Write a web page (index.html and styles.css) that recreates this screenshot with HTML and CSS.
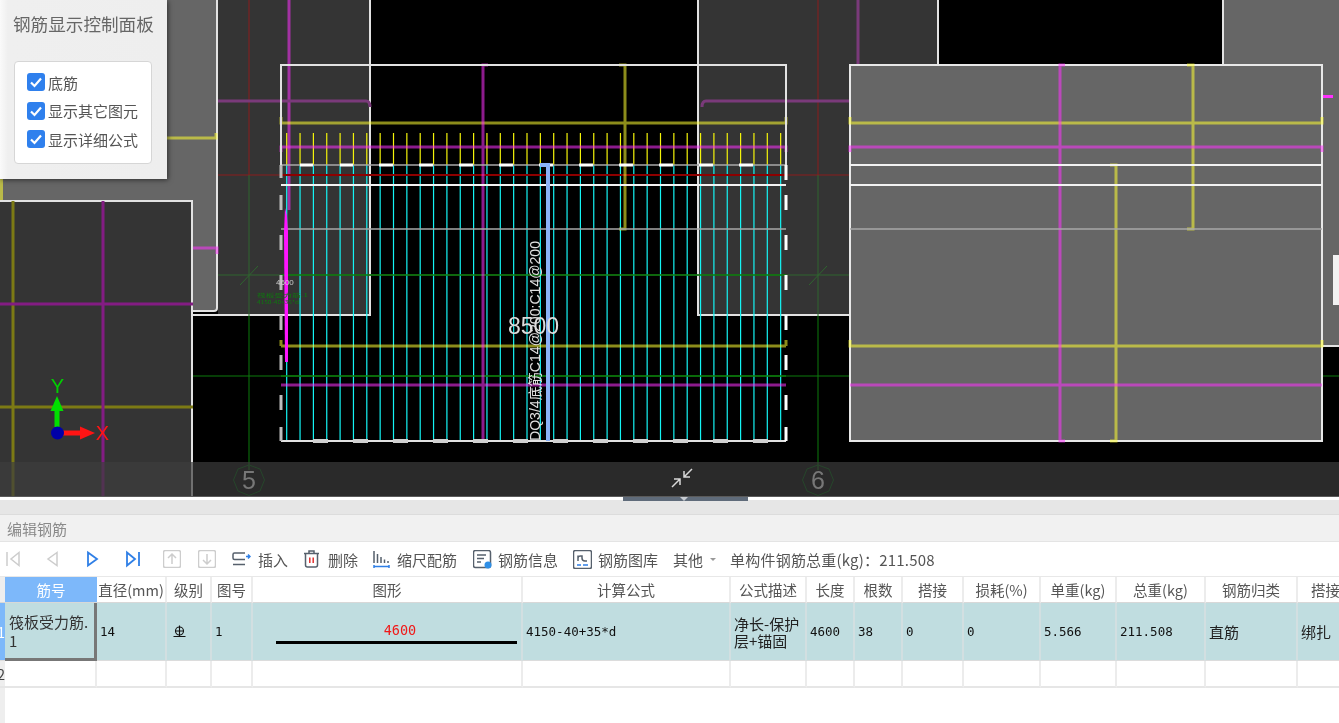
FILE: index.html
```html
<!DOCTYPE html>
<html lang="zh-CN">
<head>
<meta charset="utf-8">
<title>编辑钢筋</title>
<link rel="stylesheet" href="styles.css">
</head>
<body>
<div class="app">
  <section class="viewport">
    <svg class="cad" width="1339" height="496" viewBox="0 0 1339 496">
      <rect class="bg-black" width="1339" height="496"/>
      <!-- structural blocks behind the slab -->
      <rect class="fill-gray" x="0" y="0" width="217" height="311"/>
      <path class="ln-block" d="M217 0V308q0 3-3 3H193"/>
      <rect class="fill-dark" x="218" y="0" width="152" height="315"/>
      <path class="ln-block" d="M370 0V315H193"/>
      <rect class="fill-dark" x="698" y="0" width="240" height="315"/>
      <path class="ln-block" d="M698 0V315H850M938 0V65"/>
      <rect class="fill-gray" x="1223" y="0" width="116" height="346"/>
      <path class="ln-block" d="M1223 0V65M1322 346H1339"/>
      <rect class="fill-white" x="1333" y="255" width="6" height="50"/>
      <rect class="fill-magenta" x="1322" y="95" width="11" height="3"/>
      <rect class="fill-dark" x="0" y="201" width="192" height="295"/>
      <path class="ln-block" d="M0 201H192V496"/>

      <!-- axis and grid lines -->
      <path class="ln-red" d="M249 0V175M818 0V175M218 175H850"/>
      <path class="ln-green-dim" d="M249 175V315M818 175V315M218 275H850M240 285L258 266M809 285L827 266"/>
      <path class="ln-green" d="M249 315V470M818 315V470M193 376H850M1322 376H1339"/>

      <!-- bars in surrounding blocks -->
      <path class="ln-olive" d="M13 201V496M0 407H193"/>
      <path class="ln-purple" d="M103 201V496M0 304H193"/>
      <path class="ln-yellow" d="M1.500 178V200M167 138H216V133"/>
      <path class="ln-magenta" d="M193 248H217V254M289 0V210"/>
      <path class="ln-purple-soft" d="M218 101H366Q370 101 370 107M702 107Q702 101 706 101H850M858 0V65"/>

      <!-- centre slab -->
      <path class="ln-cyan" d="M286.7 165V440M300.05 165V440M313.4 165V440M326.75 165V440M340.1 165V440M353.45 165V440M366.8 165V440M380.15 165V440M393.5 165V440M406.85 165V440M420.2 165V440M433.55 165V440M446.9 165V440M460.25 165V440M473.6 165V440M486.95 165V440M500.3 165V440M513.65 165V440M527 165V440M540.35 165V440M553.7 165V440M567.05 165V440M580.4 165V440M593.75 165V440M607.1 165V440M620.45 165V440M633.8 165V440M647.15 165V440M660.5 165V440M673.85 165V440M687.2 165V440M700.55 165V440M713.9 165V440M727.25 165V440M740.6 165V440M753.95 165V440M767.3 165V440M780.65 165V440"/>
      <path class="ln-tick" d="M286.7 133V165M300.05 133V165M313.4 133V165M326.75 133V165M340.1 133V165M353.45 133V165M366.8 133V165M380.15 133V165M393.5 133V165M406.85 133V165M420.2 133V165M433.55 133V165M446.9 133V165M460.25 133V165M473.6 133V165M486.95 133V165M500.3 133V165M513.65 133V165M527 133V165M540.35 133V165M553.7 133V165M567.05 133V165M580.4 133V165M593.75 133V165M607.1 133V165M620.45 133V165M633.8 133V165M647.15 133V165M660.5 133V165M673.85 133V165M687.2 133V165M700.55 133V165M713.9 133V165M727.25 133V165M740.6 133V165M753.95 133V165M767.3 133V165M780.65 133V165"/>
      <path class="ln-red-wide" d="M281 175H786"/>
      <path class="ln-green-over" d="M281 376H786M281 275H786"/>
      <path class="ln-yellow" d="M281 117V123H786V117M281 346H786M281 340V346M786 340V346M619 65H625V229H619"/>
      <path class="ln-magenta" d="M281 152V147H786V152M281 385H786M488 65H483V441"/>
      <path class="ln-soft" d="M281 165H786M281 229H786"/>
      <path class="ln-white-thin" d="M281 185H786"/>
      <path class="ln-dash" d="M300 165H313M340 165H353M379 165H393M419 165H433M459 165H473M499 165H513M539 165H553M579 165H593M619 165H633M659 165H673M699 165H713M739 165H753"/>
      <path class="ln-block" d="M281 165V65H786V165M281 441H786"/>
      <path class="ln-soft-thick" d="M313 441H328M353 441H368M393 441H408M433 441H448M473 441H488M513 441H528M553 441H568M593 441H608M633 441H648M673 441H688M713 441H728M753 441H768"/>
      <path class="ln-sidedash" d="M281 165V178M281 195V210M281 235V250M281 275V290M281 315V330M281 355V370M281 395V410M281 427V441"/>
      <path class="ln-edge" d="M786 165V180M786 195V210M786 235V250M786 275V290M786 315V330M786 355V370M786 395V410M786 427V441"/>
      <polygon class="fill-bright" points="285,208 287,216 288,232 288,362 285,362 284,232"/>
      <path class="ln-blue" d="M540 165H548V441"/>

      <text class="t-small" x="276" y="285">4600</text>
      <text class="t-green" x="257" y="297" textLength="51" lengthAdjust="spacingAndGlyphs">筏板受力筋.1</text>
      <text class="t-green" x="257" y="303.500" textLength="42" lengthAdjust="spacingAndGlyphs">4150-40+35*d</text>
      <text class="t-dim" x="533.5" y="334">8500</text>
      <text class="t-rot" transform="translate(540 441) rotate(-90)" textLength="200" lengthAdjust="spacingAndGlyphs">DQ3/4底筋C14@200:C14@200</text>

      <!-- right slab -->
      <rect class="slab" x="850" y="65" width="472" height="376"/>
      <path class="ln-yellow-hi" d="M850 117V123H1322V117M850 340V346H1322V340M1187 65H1193V229H1187M1110 165H1116V441H1110"/>
      <path class="ln-magenta-hi" d="M850 152V147H1322V152M850 385H1322M1065 65H1060V441H1065"/>
      <path class="ln-white-thin" d="M850 165H1322M850 185H1322"/>
      <path class="ln-soft" d="M850 229H1322"/>

      <!-- UCS axes -->
      <path class="ax-g" d="M57 427V405"/>
      <polygon class="ax-g-fill" points="57,396 63.500,411 50.500,411"/>
      <path class="ax-r" d="M63 433H82"/>
      <polygon class="ax-r-fill" points="95,433 80,426.500 80,439.500"/>
      <circle class="ax-o" cx="57.500" cy="433" r="6.500"/>
      <text class="t-ax-y" x="57.500" y="393">Y</text>
      <text class="t-ax-x" x="102.500" y="440">X</text>

      <!-- translucent status strip -->
      <rect class="strip" y="462" width="1339" height="34"/>
      <polygon class="axis-ring" points="249,465 260,469 264.500,480 260,491 249,495.500 238,491 233.500,480 238,469"/>
      <polygon class="axis-ring" points="818,465 829,469 833.500,480 829,491 818,495.500 807,491 802.500,480 807,469"/>
      <text class="t-axis" x="249" y="489">5</text>
      <text class="t-axis" x="818" y="489">6</text>
      <path class="ic-collapse" d="M692 469L684 477M684 471V477H690M672 487L680 479M680 485V479H674"/>
    </svg>

    <aside class="panel">
      <h1 class="panel-title">钢筋显示控制面板</h1>
      <div class="panel-card">
        <label class="check"><span class="box"><svg width="18" height="18" viewBox="0 0 18 18"><path d="M4 9.500L7.500 13L14 5.500"/></svg></span>底筋</label>
        <label class="check"><span class="box"><svg width="18" height="18" viewBox="0 0 18 18"><path d="M4 9.500L7.500 13L14 5.500"/></svg></span>显示其它图元</label>
        <label class="check"><span class="box"><svg width="18" height="18" viewBox="0 0 18 18"><path d="M4 9.500L7.500 13L14 5.500"/></svg></span>显示详细公式</label>
      </div>
    </aside>
  </section>

  <div class="splitter"><div class="splitter-tab"><span class="splitter-caret"></span></div></div>
  <div class="band"></div>
  <div class="titlebar">编辑钢筋</div>

  <div class="toolbar">
    <div class="nav-group">
      <svg class="nav off" width="14" height="18" viewBox="0 0 14 18"><path d="M1 2V16M13 2.500L5 9L13 15.500Z"/></svg>
      <svg class="nav off" width="14" height="18" viewBox="0 0 14 18"><path d="M11 2.500L2 9L11 15.500Z"/></svg>
      <svg class="nav on" width="14" height="18" viewBox="0 0 14 18"><path d="M2 2.500L11 9L2 15.500Z"/></svg>
      <svg class="nav on" width="14" height="18" viewBox="0 0 14 18"><path d="M1 2.500L9 9L1 15.500ZM13 2V16"/></svg>
    </div>
    <div class="move-group">
      <svg class="nav off" width="18" height="18" viewBox="0 0 18 18"><rect x="0.500" y="0.500" width="17" height="17" rx="2"/><path d="M9 14V4M5 8L9 4L13 8"/></svg>
      <svg class="nav off" width="18" height="18" viewBox="0 0 18 18"><rect x="0.500" y="0.500" width="17" height="17" rx="2"/><path d="M9 4V14M5 10L9 14L13 10"/></svg>
    </div>
    <div class="tool tool-insert">
      <svg width="19" height="18" viewBox="0 0 19 18"><path class="ic-dark" d="M13 3H2.500a1.500 1.500 0 0 0-1.500 1.500V8a1.500 1.500 0 0 0 1.500 1.500H13M1 14.500H13"/><path class="ic-blue" d="M14 6.500H18M16 4.500L18 6.500L16 8.500"/></svg>
      <span>插入</span>
    </div>
    <div class="tool tool-delete">
      <svg width="17" height="18" viewBox="0 0 17 18"><path class="ic-dark" d="M1 3.500H16M6 3.500V1H11V3.500M2.500 3.500V15a2 2 0 0 0 2 2H12.500a2 2 0 0 0 2-2V3.500"/><path class="ic-red" d="M6.800 7.500V13M10.200 7.500V13"/></svg>
      <span>删除</span>
    </div>
    <div class="tool tool-scale">
      <svg width="17" height="18" viewBox="0 0 17 18"><path class="ic-dark" d="M1 1V13M4.500 4V13M8 7V13M11.500 9.500V13M15 11V13"/><path class="ic-blue" d="M1 16.500H16M1 15V18M16 15V18"/></svg>
      <span>缩尺配筋</span>
    </div>
    <div class="tool tool-wide">
      <svg width="19" height="19" viewBox="0 0 19 19"><rect class="ic-dark" x="0.500" y="0.500" width="17" height="17" rx="2"/><path class="ic-dark" d="M4 5H13M4 8.500H11M4 12H8"/><circle class="ic-blue-fill" cx="15" cy="15" r="3.500"/></svg>
      <span>钢筋信息</span>
    </div>
    <div class="tool tool-wide">
      <svg width="19" height="19" viewBox="0 0 19 19"><rect class="ic-dark" x="0.500" y="0.500" width="18" height="18" rx="2"/><path class="ic-dark" d="M5 5.500V11M5 8Q5 6 7.500 6H9V8Q9 11 12 11H14"/><path class="ic-blue" d="M4 15H8M10 15H15"/></svg>
      <span>钢筋图库</span>
    </div>
    <div class="tool tool-more">
      <span>其他</span>
      <span class="caret"></span>
    </div>
    <div class="total">单构件钢筋总重(kg)：211.508</div>
  </div>

  <div class="grid-wrap">
    <table class="grid">
      <colgroup>
        <col class="c-idx"><col class="c-no"><col class="c-dia"><col class="c-lvl"><col class="c-fig"><col class="c-shape"><col class="c-calc"><col class="c-desc"><col class="c-len"><col class="c-cnt"><col class="c-lap"><col class="c-loss"><col class="c-unit"><col class="c-sum"><col class="c-type"><col class="c-form">
      </colgroup>
      <thead>
        <tr>
          <th class="idx"></th><th class="sel">筋号</th><th>直径(mm)</th><th>级别</th><th>图号</th><th>图形</th><th>计算公式</th><th>公式描述</th><th>长度</th><th>根数</th><th>搭接</th><th>损耗(%)</th><th>单重(kg)</th><th>总重(kg)</th><th>钢筋归类</th><th>搭接形式</th>
        </tr>
      </thead>
      <tbody>
        <tr class="row-active">
          <td class="idx idx-on">1</td>
          <td class="name">筏板受力筋.1</td>
          <td class="mono">14</td>
          <td class="mono"><svg class="grade" width="13" height="13" viewBox="0 0 13 13"><circle cx="6.500" cy="6" r="4"/><path d="M6.500 0.500V12M0.500 11.500H12.500M2 6H11"/></svg></td>
          <td class="mono">1</td>
          <td class="figure"><div class="fig-label">4600</div><div class="fig-bar"></div></td>
          <td class="mono">4150-40+35*d</td>
          <td class="text desc">净长-保护层+锚固</td>
          <td class="mono">4600</td>
          <td class="mono">38</td>
          <td class="mono">0</td>
          <td class="mono">0</td>
          <td class="mono">5.566</td>
          <td class="mono">211.508</td>
          <td class="text">直筋</td>
          <td class="text">绑扎</td>
        </tr>
        <tr class="row-empty">
          <td class="idx">2</td><td></td><td></td><td></td><td></td><td></td><td></td><td></td><td></td><td></td><td></td><td></td><td></td><td></td><td></td><td></td>
        </tr>
      </tbody>
    </table>
  </div>
</div>
</body>
</html>
```

FILE: styles.css
```css
* { box-sizing: border-box; }
html, body { margin: 0; padding: 0; height: 100%; background: #fff; overflow: hidden; }
body { font-family: "Noto Sans CJK SC", "Noto Sans", sans-serif; font-size: 14px; color: #333; }
.app { display: flex; flex-direction: column; width: 1339px; height: 723px; overflow: hidden; filter: blur(0.45px); }

/* CAD viewport */
.viewport { position: relative; flex: none; height: 496px; overflow: hidden; background: #000; }
.cad { display: block; }
.bg-black { fill: #000; }
.fill-gray { fill: #666; }
.fill-dark { fill: #343434; }
.fill-white { fill: #f2f2f2; }
.fill-magenta { fill: #ff30ff; }
.fill-bright { fill: #ff14ff; }
.slab { fill: #666; stroke: #e8e8e8; stroke-width: 2; }
path { fill: none; }
.ln-block { stroke: #e2e2e2; stroke-width: 2; }
.ln-red { stroke: #8a1c1c; stroke-width: 1; }
.ln-red-wide { stroke: #8e0000; stroke-width: 2; }
.ln-green-dim { stroke: #2f652f; stroke-width: 1; }
.ln-green { stroke: #0c7a0c; stroke-width: 1; }
.ln-green-over { stroke: #0c7a0c; stroke-width: 1.500; }
.ln-olive { stroke: #7c7a14; stroke-width: 3; }
.ln-purple { stroke: #831c83; stroke-width: 3; }
.ln-purple-soft { stroke: #7a3a7a; stroke-width: 3; }
.ln-yellow { stroke: rgba(255, 255, 50, .55); stroke-width: 3; }
.ln-magenta { stroke: rgba(255, 50, 255, .55); stroke-width: 3; }
.ln-yellow-hi { stroke: rgba(255, 255, 50, .55); stroke-width: 3; }
.ln-magenta-hi { stroke: rgba(255, 50, 255, .55); stroke-width: 3; }
.ln-cyan { stroke: #14f4f4; stroke-width: 1.200; }
.ln-tick { stroke: #f4f40a; stroke-width: 1.200; }
.ln-soft { stroke: #a8a8a8; stroke-width: 1.500; }
.ln-white-thin { stroke: #f2f2f2; stroke-width: 2; }
.ln-dash { stroke: #fff; stroke-width: 3; }
.ln-soft-thick { stroke: #d0d0d0; stroke-width: 4; }
.ln-sidedash { stroke: #bdbdbd; stroke-width: 3; }
.ln-edge { stroke: #fff; stroke-width: 3; }
.ln-blue { stroke: #8ab2f8; stroke-width: 4; }
.strip { fill: rgba(61, 61, 61, .69); }
.axis-ring { fill: none; stroke: #26462a; stroke-width: 1; }
.ax-g { stroke: #00e000; stroke-width: 5; }
.ax-r { stroke: #ff1414; stroke-width: 5; }
.ax-g-fill { fill: #00e000; }
.ax-r-fill { fill: #ff1414; }
.ax-o { fill: #0000a8; }
.ic-collapse { stroke: #d8d8d8; stroke-width: 1.500; }

.t-small { font: 8px "Liberation Sans", sans-serif; fill: #cfcfcf; }
.t-green { font: 5px "Noto Sans CJK SC", sans-serif; fill: #0e7a0e; }
.t-dim { font: 23px "Liberation Sans", sans-serif; fill: #dcdcdc; text-anchor: middle; }
.t-rot { font: 14px "Liberation Sans", "Noto Sans CJK SC", sans-serif; fill: #e0e0e0; }
.t-ax-y { font: 20px "Liberation Sans", sans-serif; fill: #00d000; text-anchor: middle; }
.t-ax-x { font: 20px "Liberation Sans", sans-serif; fill: #ff1414; text-anchor: middle; }
.t-axis { font: 25px "Liberation Sans", sans-serif; fill: #777; text-anchor: middle; }

/* floating control panel */
.panel { position: absolute; left: 0; top: 0; width: 167px; height: 179px; padding: 13px 15px 0 14px; background: linear-gradient(90deg, #fafafa 0, #efefef 8px, #eee 100%); box-shadow: 1px 1px 5px rgba(0, 0, 0, .55); }
.panel-title { margin: 0 0 0 -1px; font-size: 17.600px; font-weight: 400; line-height: 22px; color: #666; white-space: nowrap; }
.panel-card { display: flex; flex-direction: column; height: 103px; margin-top: 26px; padding: 11px 0 0 12px; background: #fff; border: 1px solid #d6d6d6; border-radius: 4px; }
.check { display: flex; align-items: center; gap: 3px; height: 28.500px; padding-bottom: 10.500px; font-size: 15px; color: #555; white-space: nowrap; }
.box { display: block; width: 18px; height: 18px; background: #2f80ed; border-radius: 3px; flex: none; }
.box svg { display: block; }
.box path { stroke: #fff; stroke-width: 2.200; }

/* splitter + headers */
.splitter { flex: none; height: 4px; padding-left: 623px; background: #fff; border-top: 1px solid #5a5a5a; }
.splitter-tab { position: relative; width: 125px; height: 4px; background: #5f6b7a; }
.splitter-caret { position: absolute; left: 57px; top: 0; border: 4px solid transparent; border-top-color: #c8ccd2; border-bottom: 0; }
.band { flex: none; height: 15px; background: #e6e6e6; border-bottom: 1px solid #dcdcdc; }
.titlebar { flex: none; height: 27px; padding-left: 7px; background: #f1f1f1; border-bottom: 1px solid #e4e4e4; font-size: 15px; line-height: 27px; color: #8a8a8a; }

/* toolbar */
.toolbar { flex: none; display: flex; align-items: center; height: 34px; padding-left: 6px; background: #fff; font-size: 15px; color: #555; white-space: nowrap; }
.nav-group { display: flex; align-items: center; gap: 26px; }
.move-group { display: flex; align-items: center; gap: 17px; margin-left: 23px; }
.nav path, .nav rect { fill: none; stroke-width: 1.500; }
.nav.off path, .nav.off rect { stroke: #cdcdcd; }
.nav.on path { stroke: #2f7fe6; stroke-width: 1.800; }
.tool { display: flex; align-items: center; margin-left: 15px; gap: 7px; }
.tool svg { flex: none; }
.tool-insert { margin-left: 16px; }
.tool-delete { gap: 8px; }
.tool-scale { gap: 7px; }
.tool-wide { gap: 6px; }
.tool-scale + .tool-wide { margin-left: 16px; }
.tool-more { gap: 7px; }
.caret { border: 3.500px solid transparent; border-top-color: #999; border-bottom: 0; margin-left: 0; }
.total { margin-left: 14px; letter-spacing: .2px; }
.ic-dark { fill: none; stroke: #56606c; stroke-width: 1.500; }
.ic-blue { fill: none; stroke: #2f7fe6; stroke-width: 1.500; }
.ic-red { fill: none; stroke: #e03030; stroke-width: 1.500; }
.ic-blue-fill { fill: #2f8fe6; }

/* table */
.grid-wrap { flex: 1; min-height: 0; overflow: hidden; position: relative; background: #fff; border-top: 1px solid #e8e8e8; background-image: linear-gradient(90deg, #eeeeee 5px, transparent 5px); }
.grid { table-layout: fixed; width: 1384px; border-collapse: separate; border-spacing: 0; }
.c-idx { width: 5px; } .c-no { width: 92px; } .c-dia { width: 70px; } .c-lvl { width: 45px; } .c-fig { width: 41px; }
.c-shape { width: 270px; } .c-calc { width: 208px; } .c-desc { width: 76px; } .c-len { width: 48px; } .c-cnt { width: 48px; }
.c-lap { width: 61px; } .c-loss { width: 77px; } .c-unit { width: 76px; } .c-sum { width: 89px; } .c-type { width: 92px; } .c-form { width: 86px; }
.grid th { height: 26px; padding: 0; font-weight: 400; font-size: 14.500px; color: #555; text-align: center; white-space: nowrap; overflow: hidden; background: #fff; border-right: 2px solid #ececec; border-bottom: 1px solid #d8d8d8; }
.grid th.sel { background: #7db8fa; color: #fff; border-right: 0; }
.grid th.idx { background: #eee; border-right: 0; }
.grid td { padding: 0 0 0 3px; overflow: hidden; border-right: 2px solid #ececec; }
.row-active td { height: 58px; background: #c0dde0; border-right-color: #d2dfe1; border-bottom: 1px solid #dcdcdc; font-size: 15px; color: #222; }
.row-empty td { height: 27px; background: #fff; border-bottom: 2px solid #e6e6e6; }
.grid td.idx { padding: 0; direction: rtl; border-right: 0; font-size: 14px; background: #eee; color: #444; white-space: nowrap; }
.grid td.idx-on { background: #7db8fa; color: #fff; }
.grid td.name { padding: 0 0 0 4px; font-size: 15px; line-height: 19px; word-break: break-all; color: #333; border-right: 3px solid #777; border-bottom: 3px solid #777; }
.mono { font-family: "DejaVu Sans Mono", monospace; font-size: 12.500px; }
.row-active td.mono { font-size: 12.500px; color: #111; }
.row-active td.desc { line-height: 17px; }
.grade { display: block; margin-left: 3px; }
.grade circle, .grade path { fill: none; stroke: #111; stroke-width: 1.100; }
.grid td.figure { padding: 0; }
.fig-label { font-family: "DejaVu Sans Mono", monospace; font-size: 13.500px; line-height: 16px; color: #f01818; text-align: center; margin: 3px 0 0 26px; }
.fig-bar { height: 2.500px; margin: 3px 4px 0 23px; background: #000; }
```
